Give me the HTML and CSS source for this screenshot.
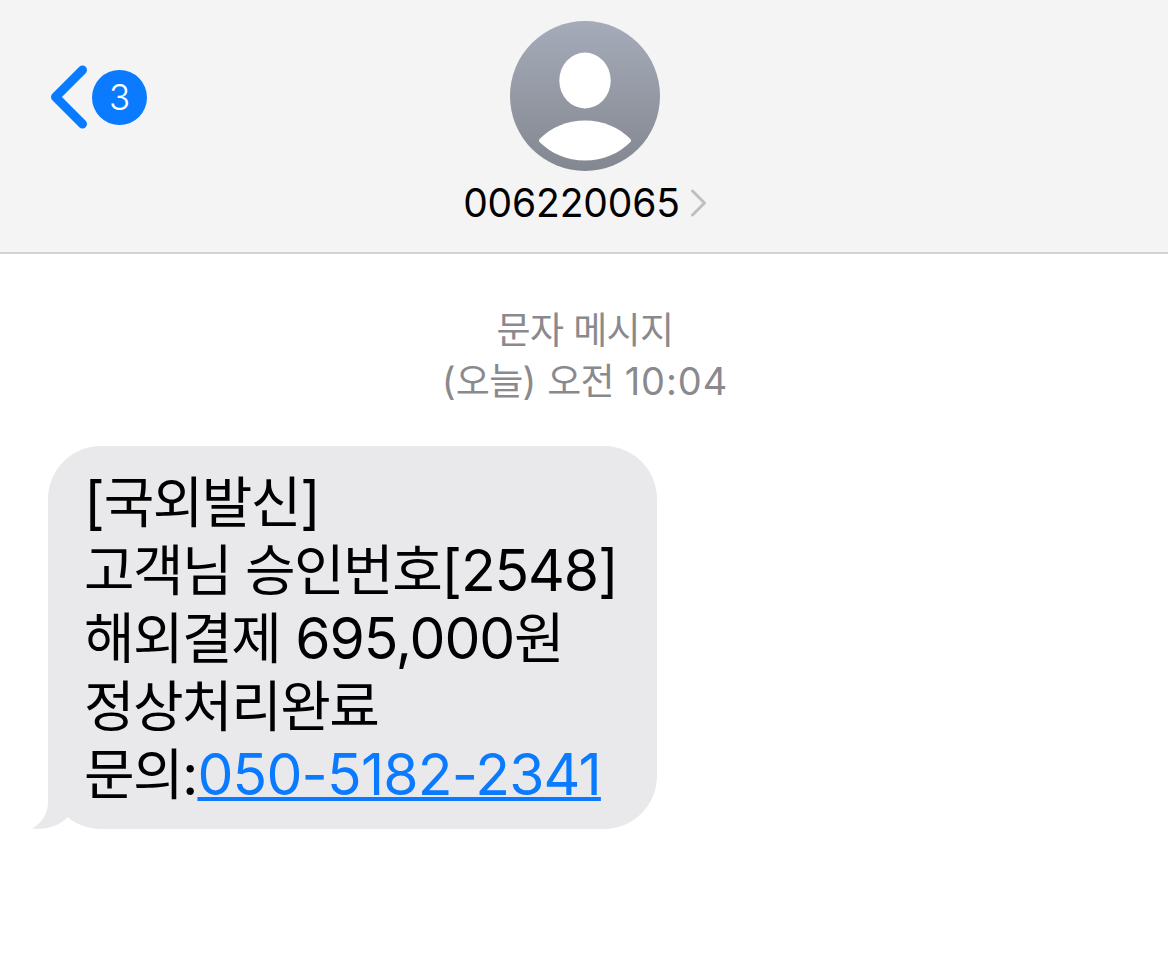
FILE: index.html
```html
<!DOCTYPE html>
<html lang="ko">
<head>
  <meta charset="UTF-8">
  <title>문자 메시지</title>
  <link rel="stylesheet" href="styles.css">
</head>
<body>

  <header class="header">
    <a class="back" href="#">
      <svg class="back-arrow" width="38" height="64" viewBox="0 0 38 64">
        <path d="M32.500 5 L5.500 32 L32.500 59" />
      </svg>
      <span class="badge">3</span>
    </a>

    <div class="contact">
      <svg class="avatar" width="150" height="150" viewBox="0 0 150 150">
        <defs>
          <linearGradient id="avatarBg" x1="0" y1="0" x2="0" y2="1">
            <stop offset="0" stop-color="#a5abb9" />
            <stop offset="1" stop-color="#838790" />
          </linearGradient>
        </defs>
        <circle cx="75" cy="75" r="75" fill="url(#avatarBg)" />
        <ellipse cx="75" cy="59.5" rx="25.7" ry="28" fill="#fff" />
        <path d="M29.5 118 C41 106.500 57 99.500 75 99.500 S109 106.500 120.500 118 Q121.800 119.500 120.500 121 C109 132.500 93 139.500 75 139.500 S41 132.500 29.500 121 Q28.200 119.500 29.500 118 Z" fill="#fff" />
      </svg>
      <div class="contact-name">
        <span class="number">006220065</span>
        <svg class="more" width="17" height="28" viewBox="0 0 17 28">
          <path d="M2.500 2 L14.500 14 L2.500 26" />
        </svg>
      </div>
    </div>
  </header>

  <main class="messages">
    <div class="timestamp">
      <div><span class="ko">문자 메시지</span></div>
      <div>(<span class="ko">오늘</span>) <span class="ko">오전</span> <span class="time">10:04</span></div>
    </div>

    <div class="bubble">
      <p>[<span class="ko">국외발신</span>]</p>
      <p><span class="ko">고객님 승인번호</span>[2548]</p>
      <p><span class="ko">해외결제</span> 695,000<span class="ko">원</span></p>
      <p><span class="ko">정상처리완료</span></p>
      <p><span class="ko">문의</span>:<a href="tel:050-5182-2341">050-5182-2341</a></p>
      <svg class="tail" width="50" height="50" viewBox="0 0 50 50">
        <path d="M16 0 V23 C16 35 10 44 0 49.500 C13 51 26 48 35.500 38 L50 20 V0 Z" />
      </svg>
    </div>
  </main>

</body>
</html>
```
FILE: styles.css
```css
* {
  box-sizing: border-box;
}
body {
  margin: 0;
  background: #fff;
  color: #000;
  font-family: Inter, "Noto Sans CJK KR", sans-serif;
}
.ko {
  font-family: "Noto Sans CJK KR", sans-serif;
  line-height: 1;
}
.header {
  display: grid;
  grid-template-columns: 1fr 250px 1fr;
  height: 254px;
  background: #f4f4f4;
  border-bottom: 2px solid #d3d3d5;
}
.back {
  display: flex;
  align-items: center;
  align-self: start;
  gap: 4px;
  margin: 65px 0 0 50px;
  text-decoration: none;
}
.back-arrow path {
  fill: none;
  stroke: #0a7aff;
  stroke-width: 9;
  stroke-linecap: round;
  stroke-linejoin: round;
}
.badge {
  width: 55px;
  height: 55px;
  border-radius: 50%;
  background: #0a7aff;
  color: #fff;
  font-size: 35px;
  font-weight: 300;
  line-height: 55px;
  text-align: center;
}
.contact {
  display: flex;
  flex-direction: column;
  align-items: center;
  padding: 21.4px 0 0 2px;
}
.contact-name {
  display: flex;
  align-items: center;
  gap: 10px;
  margin-top: 8.5px;
}
.number {
  font-size: 39px;
  line-height: 46px;
  letter-spacing: -0.15px;
}
.more path {
  fill: none;
  stroke: #bfbfc1;
  stroke-width: 3;
  stroke-linecap: round;
  stroke-linejoin: round;
}
.messages {
  padding: 51px 46px 0 48px;
}
.timestamp {
  color: #8a8a8e;
  font-size: 38px;
  line-height: 51px;
  text-align: center;
}
.timestamp .ko {
  font-size: 37px;
  letter-spacing: -0.6px;
}
.time {
  letter-spacing: 0.9px;
}
.bubble {
  position: relative;
  width: 609px;
  height: 383px;
  margin-top: 39px;
  padding: 23px 36px 0;
  border-radius: 53px;
  background: #e9e9eb;
  font-size: 57px;
  line-height: 68px;
  letter-spacing: -1.1px;
  white-space: nowrap;
}
.bubble p {
  margin: 0;
}
.bubble .ko {
  font-size: 55px;
  letter-spacing: -1.55px;
  vertical-align: 1px;
}
.bubble a {
  color: #0a7aff;
  letter-spacing: -0.8px;
  text-decoration-thickness: 4px;
  text-underline-offset: 2px;
  text-decoration-skip-ink: none;
}
.tail {
  position: absolute;
  left: -16px;
  bottom: 0;
}
.tail path {
  fill: #e9e9eb;
}
```
